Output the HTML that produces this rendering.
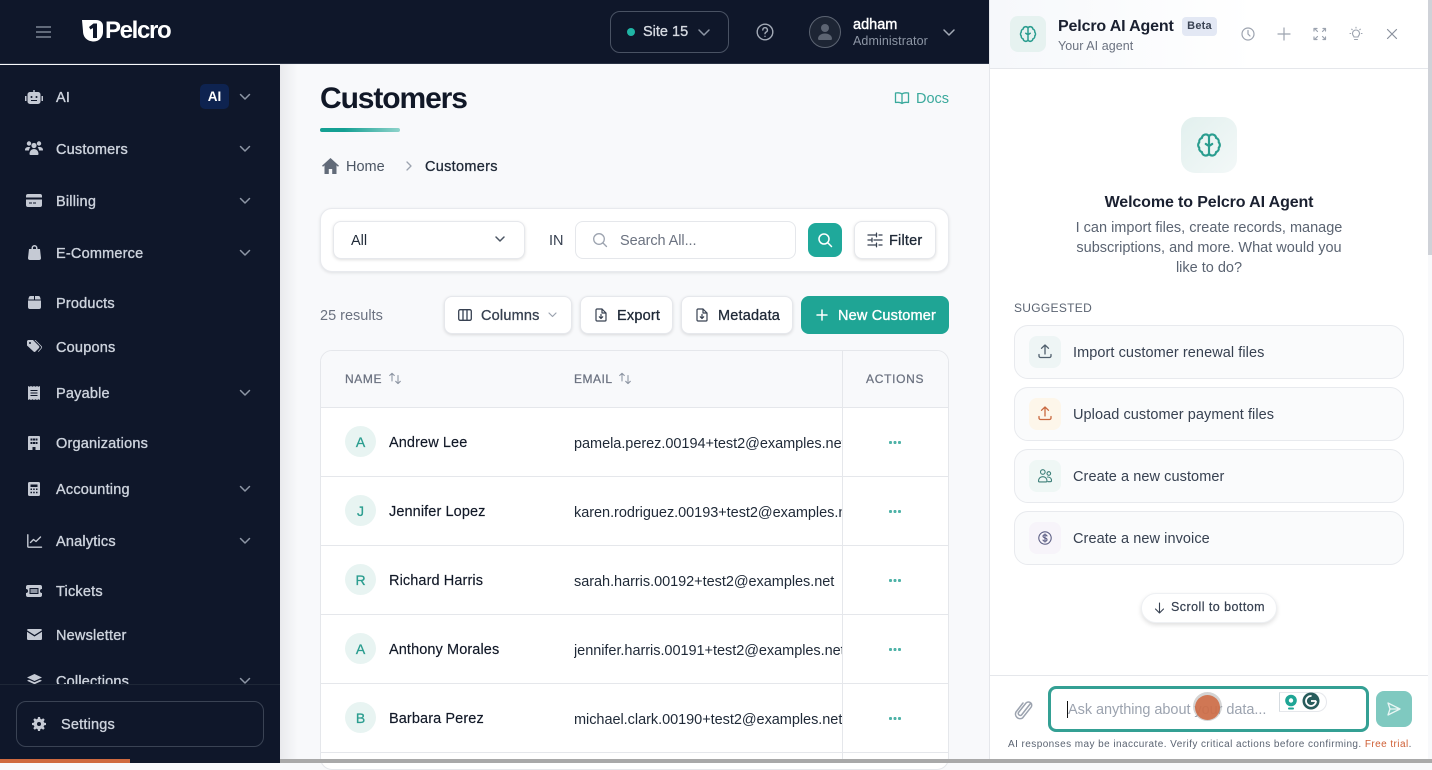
<!DOCTYPE html>
<html lang="en"><head><meta charset="utf-8"><title>Customers</title>
<style>
*{box-sizing:border-box}
html,body{margin:0;padding:0;width:1432px;height:763px;overflow:hidden;background:#f8f9fb;font-family:"Liberation Sans",sans-serif;color:#111827}
.a{position:absolute;white-space:nowrap}
.t{position:absolute;white-space:nowrap;line-height:20px;height:20px;transform:translateY(1px)}
svg{position:absolute;display:block;overflow:visible}
.nav{color:#cdd3dd;font-size:14.5px;-webkit-text-stroke:.35px #cdd3dd;letter-spacing:.2px;left:56px}
.chev{fill:none;stroke:#8d96a5;stroke-width:1.5;stroke-linecap:round;stroke-linejoin:round}
.card{position:absolute;background:#fff;border:1px solid #e6e8ec;border-radius:8px;box-shadow:0 1px 3px rgba(0,0,0,.13)}
.btxt{font-size:14.5px;color:#1f2937;-webkit-text-stroke:.3px #1f2937;letter-spacing:.2px}
.hline{position:absolute;left:321px;width:627px;height:1px;background:#e5e7eb}
.av{position:absolute;left:345px;width:31px;height:31px;border-radius:50%;background:#e8f4f2;color:#2a9d8f;text-align:center;font-size:14px;-webkit-text-stroke:.3px #2a9d8f;line-height:32px}
.nm{left:389px;font-size:14.5px;color:#111827;letter-spacing:.1px;-webkit-text-stroke:.15px #111827}
.em{left:574px;font-size:14.5px;color:#1f2937;letter-spacing:-.04px;width:268px;overflow:hidden}
.dots{position:absolute;left:889px;width:13px;height:3px;background:radial-gradient(circle at 1.5px 1.5px,#4fb3a8 1.5px,transparent 1.6px) 0 0/4.5px 3px repeat-x}
.sug{position:absolute;left:1014px;width:390px;height:54px;background:#fafbfc;border:1px solid #e8eaee;border-radius:14px}
.sic{position:absolute;left:1029px;width:32px;height:32px;border-radius:8px}
.stx{left:1073px;font-size:14.5px;color:#374151;letter-spacing:.07px}
.hd{font-size:12px;letter-spacing:.6px;color:#6b7280;-webkit-text-stroke:.25px #6b7280}
</style></head><body>

<!-- main -->
<div class="a" style="left:280px;top:64px;width:709px;height:699px;background:#f8f9fb"></div>
<div class="a" style="left:280px;top:64px;width:18px;height:699px;background:linear-gradient(90deg,#e9eaed,#f8f9fb)"></div>

<div class="t" style="left:320px;top:79px;font-size:30px;font-weight:700;line-height:38px;height:38px;letter-spacing:-1.1px;color:#111827">Customers</div>
<div class="a" style="left:320px;top:128px;width:80px;height:4px;border-radius:2px;background:linear-gradient(90deg,#14a093 0,#14a093 30%,#8fd3cb 100%)"></div>

<svg style="left:894px;top:91px" width="16" height="14" viewBox="0 0 16 14" fill="none" stroke="#3aa99c" stroke-width="1.3" stroke-linejoin="round"><path d="M8 3C6.500 1.800 4 1.600 1.500 2v9.500c2.500-.4 5-.2 6.500 1 1.500-1.200 4-1.400 6.500-1V2C12 1.600 9.500 1.800 8 3zM8 3v9.500"/></svg>
<div class="t" style="left:916px;top:88px;font-size:14.5px;color:#3aa99c">Docs</div>

<svg style="left:322px;top:158px" width="17" height="16" viewBox="0 0 17 16" fill="#626b79"><path d="M8.500 0 0 7.800l1 .9L2.500 7.400V16h4.300v-5h3.400v5h4.300V7.400l1.500 1.300 1-.9z"/></svg>
<div class="t" style="left:346px;top:156px;font-size:14.5px;color:#4b5563">Home</div>
<svg style="left:405px;top:161px" width="8" height="10" viewBox="0 0 8 10" fill="none" stroke="#9ca3af" stroke-width="1.3" stroke-linecap="round" stroke-linejoin="round"><path d="M2 1l4 4-4 4"/></svg>
<div class="t btxt" style="left:425px;top:156px;letter-spacing:.3px">Customers</div>

<!-- filter card -->
<div class="a" style="left:320px;top:208px;width:629px;height:64px;background:#fff;border:1px solid #e8eaee;border-radius:12px;box-shadow:0 1px 3px rgba(0,0,0,.1)"></div>
<div class="card" style="left:333px;top:221px;width:192px;height:38px"></div>
<div class="t" style="left:351px;top:230px;font-size:14.5px;color:#1f2937">All</div>
<svg class="chev" style="left:495px;top:236px;stroke:#4b5563" width="10" height="7" viewBox="0 0 10 7"><path d="M1 1l4 4 4-4"/></svg>
<div class="t" style="left:549px;top:230px;font-size:14.5px;color:#374151">IN</div>
<div class="a" style="left:575px;top:221px;width:221px;height:38px;background:#fff;border:1px solid #e5e7eb;border-radius:8px"></div>
<svg style="left:592px;top:232px" width="16" height="16" viewBox="0 0 16 16" fill="none" stroke="#9ca3af" stroke-width="1.3" stroke-linecap="round"><circle cx="7" cy="7" r="5.300"/><path d="M11 11l3.500 3.500"/></svg>
<div class="t" style="left:620px;top:230px;font-size:14.5px;color:#6b7280;letter-spacing:-.07px">Search All...</div>
<div class="a" style="left:808px;top:223px;width:34px;height:34px;border-radius:8px;background:#1fa99b"></div>
<svg style="left:817px;top:232px" width="16" height="16" viewBox="0 0 16 16" fill="none" stroke="#fff" stroke-width="1.5" stroke-linecap="round"><circle cx="7" cy="7" r="5"/><path d="M11 11l3.500 3.500"/></svg>
<div class="card" style="left:854px;top:221px;width:82px;height:38px"></div>
<svg style="left:867px;top:232px" width="16" height="16" viewBox="0 0 16 16" fill="none" stroke="#374151" stroke-width="1.3" stroke-linecap="round"><path d="M1 3h8M12 3h3M1 8h3M7 8h8M1 13h8M12 13h3M9.500 1.200v3.600M5 6.200v3.600M9.500 11.200v3.600"/></svg>
<div class="t btxt" style="left:889px;top:230px">Filter</div>

<!-- toolbar -->
<div class="t" style="left:320px;top:305px;font-size:14.5px;color:#6b7280">25 results</div>
<div class="card" style="left:444px;top:296px;width:128px;height:38px"></div>
<svg style="left:458px;top:309px" width="14" height="12" viewBox="0 0 14 12" fill="none" stroke="#374151" stroke-width="1.3"><rect x=".7" y=".7" width="12.600" height="10.600" rx="1.5"/><path d="M5 1v10M9 1v10"/></svg>
<div class="t btxt" style="left:481px;top:305px;color:#374151;-webkit-text-stroke-color:#374151">Columns</div>
<svg class="chev" style="left:548px;top:312px;stroke:#9ca3af;stroke-width:1.2" width="9" height="6" viewBox="0 0 9 6"><path d="M1 1l3.500 3.500L8 1"/></svg>
<div class="card" style="left:580px;top:296px;width:93px;height:38px"></div>
<svg style="left:595px;top:308px" width="12" height="14" viewBox="0 0 12 14" fill="none" stroke="#374151" stroke-width="1.2" stroke-linejoin="round" stroke-linecap="round"><path d="M1 2a1 1 0 0 1 1-1h5l4 4v7a1 1 0 0 1-1 1H2a1 1 0 0 1-1-1zM7 1v4h4M6 6.500v4M4.300 8.800 6 10.500l1.700-1.700"/></svg>
<div class="t btxt" style="left:617px;top:305px">Export</div>
<div class="card" style="left:681px;top:296px;width:112px;height:38px"></div>
<svg style="left:696px;top:308px" width="12" height="14" viewBox="0 0 12 14" fill="none" stroke="#374151" stroke-width="1.2" stroke-linejoin="round" stroke-linecap="round"><path d="M1 2a1 1 0 0 1 1-1h5l4 4v7a1 1 0 0 1-1 1H2a1 1 0 0 1-1-1zM7 1v4h4M6 6.500v4M4.300 8.800 6 10.500l1.700-1.700"/></svg>
<div class="t btxt" style="left:718px;top:305px">Metadata</div>
<div class="a" style="left:801px;top:296px;width:148px;height:38px;border-radius:8px;background:#1fa595"></div>
<svg style="left:816px;top:309px" width="12" height="12" viewBox="0 0 12 12" fill="none" stroke="#fff" stroke-width="1.5" stroke-linecap="round"><path d="M6 1v10M1 6h10"/></svg>
<div class="t" style="left:838px;top:305px;font-size:14.5px;color:#fff;-webkit-text-stroke:.35px #fff;letter-spacing:.18px">New Customer</div>

<!-- table -->
<div class="a" style="left:320px;top:350px;width:629px;height:420px;background:#fff;border:1px solid #e5e7eb;border-radius:12px"></div>
<div class="a" style="left:321px;top:351px;width:627px;height:56px;background:#f8f9fb;border-radius:11px 11px 0 0"></div>
<div class="a" style="left:842px;top:351px;width:1px;height:412px;background:#e5e7eb"></div>
<div class="t hd" style="left:345px;top:368px">NAME</div>
<svg style="left:388px;top:372px" width="14" height="13" viewBox="0 0 14 13" fill="none" stroke="#9098a5" stroke-width="1.1" stroke-linecap="round" stroke-linejoin="round"><path d="M4 9V1.500M1.700 3.500 4 1.300l2.300 2.200M10 3.500V11.500M7.700 9.300l2.300 2.300 2.300-2.300"/></svg>
<div class="t hd" style="left:574px;top:368px;letter-spacing:.5px">EMAIL</div>
<svg style="left:618px;top:372px" width="14" height="13" viewBox="0 0 14 13" fill="none" stroke="#9098a5" stroke-width="1.1" stroke-linecap="round" stroke-linejoin="round"><path d="M4 9V1.500M1.700 3.500 4 1.300l2.300 2.200M10 3.500V11.500M7.700 9.300l2.300 2.300 2.300-2.300"/></svg>
<div class="t hd" style="left:866px;top:368px;letter-spacing:.7px">ACTIONS</div>

<div class="hline" style="top:407px"></div>
<div class="hline" style="top:476px"></div>
<div class="hline" style="top:545px"></div>
<div class="hline" style="top:614px"></div>
<div class="hline" style="top:683px"></div>
<div class="hline" style="top:752px"></div>

<div class="av" style="top:426px">A</div><div class="t nm" style="top:432px">Andrew Lee</div><div class="t em" style="top:433px">pamela.perez.00194+test2@examples.net</div><div class="dots" style="top:441px"></div>
<div class="av" style="top:495px">J</div><div class="t nm" style="top:501px">Jennifer Lopez</div><div class="t em" style="top:502px">karen.rodriguez.00193+test2@examples.net</div><div class="dots" style="top:510px"></div>
<div class="av" style="top:564px">R</div><div class="t nm" style="top:570px">Richard Harris</div><div class="t em" style="top:571px">sarah.harris.00192+test2@examples.net</div><div class="dots" style="top:579px"></div>
<div class="av" style="top:633px">A</div><div class="t nm" style="top:639px">Anthony Morales</div><div class="t em" style="top:640px">jennifer.harris.00191+test2@examples.net</div><div class="dots" style="top:648px"></div>
<div class="av" style="top:702px">B</div><div class="t nm" style="top:708px">Barbara Perez</div><div class="t em" style="top:709px">michael.clark.00190+test2@examples.net</div><div class="dots" style="top:717px"></div>

<!-- top bar -->
<div class="a" style="left:0;top:0;width:989px;height:64px;background:#0f172a;border-bottom:1px solid #2a3345"></div>
<svg style="left:36px;top:26px" width="15" height="12" viewBox="0 0 15 12" fill="none" stroke="#7d8594" stroke-width="1.5"><path d="M0 1h15M0 6h15M0 11h15"/></svg>
<svg style="left:82px;top:20px" width="21" height="22" viewBox="0 0 21 22"><path d="M0 0h14c4.500 0 7 2.500 7 6v6c0 5-4 9.500-9 9.500C5 21.500 1 17 1 11z" fill="#fff"/><path d="M7 7l4.500-3.500h3.500V18h-4V8l-2.500 1.500z" fill="#0f172a"/></svg>
<div class="t" style="left:105px;top:15px;font-size:24px;line-height:30px;height:30px;font-weight:700;color:#fff;letter-spacing:-1.35px">Pelcro</div>

<div class="a" style="left:610px;top:11px;width:119px;height:42px;border:1px solid #495263;border-radius:10px"></div>
<div class="a" style="left:627px;top:28px;width:8px;height:8px;border-radius:50%;background:#1fb5a5"></div>
<div class="t" style="left:643px;top:21px;font-size:14.5px;color:#d7dbe2;-webkit-text-stroke:.35px #d7dbe2">Site 15</div>
<svg class="chev" style="left:698px;top:29px" width="12" height="8" viewBox="0 0 12 8"><path d="M1 1l5 5 5-5"/></svg>
<svg style="left:756px;top:23px" width="18" height="18" viewBox="0 0 18 18" fill="none" stroke="#a3aab6" stroke-width="1.4" stroke-linecap="round"><circle cx="9" cy="9" r="7.800"/><path d="M6.800 7a2.300 2.300 0 1 1 3.400 2c-.8.500-1.200 1-1.200 1.700M9 13.300v.1"/></svg>
<div class="a" style="left:809px;top:16px;width:32px;height:32px;border-radius:50%;border:1.5px solid #5c6472;background:#1d2534"></div>
<svg style="left:815px;top:22px" width="20" height="20" viewBox="0 0 20 20" fill="#5c6472"><circle cx="10" cy="6" r="4"/><path d="M3 17c0-3.500 3-5.500 7-5.500s7 2 7 5.500c0 .8-.8 1-2 1H5c-1.200 0-2-.2-2-1z"/></svg>
<div class="t" style="left:853px;top:14px;font-size:14.5px;color:#fff;-webkit-text-stroke:.4px #fff">adham</div>
<div class="t" style="left:853px;top:30px;font-size:12.5px;color:#8d96a5;letter-spacing:.1px">Administrator</div>
<svg class="chev" style="left:943px;top:29px;stroke:#a3aab6" width="12" height="8" viewBox="0 0 12 8"><path d="M1 1l5 5 5-5"/></svg>

<!-- sidebar -->
<div class="a" style="left:0;top:65px;width:280px;height:698px;background:#0f172a;overflow:hidden"></div>
<svg style="left:25px;top:90px" width="18" height="14" viewBox="0 0 18 14" fill="#c5cad4"><path d="M5 2h8a2.500 2.500 0 0 1 2.500 2.500v7A2.500 2.500 0 0 1 13 14H5a2.500 2.500 0 0 1-2.500-2.500v-7A2.500 2.500 0 0 1 5 2zM0 6h1.500v5H0zM16.500 6H18v5h-1.500z"/><rect x="8.300" y="0" width="1.400" height="3"/><circle cx="6.500" cy="7" r="1" fill="#0f172a"/><circle cx="11.500" cy="7" r="1" fill="#0f172a"/><rect x="6" y="10" width="6" height="1" fill="#0f172a"/></svg>
<div class="t nav" style="top:87px">AI</div>
<div class="a" style="left:200px;top:84px;width:29px;height:25px;border-radius:5px;background:#0e2350;color:#fff;font-size:13.5px;font-weight:700;text-align:center;line-height:25px">AI</div>
<svg class="chev" style="left:240px;top:94px" width="10" height="6" viewBox="0 0 10 6"><path d="M.5.500 5 5 9.500.5"/></svg>

<svg style="left:25px;top:141px" width="18" height="15" viewBox="0 0 18 15" fill="#c5cad4"><circle cx="4" cy="2.500" r="2.200"/><circle cx="14" cy="2.500" r="2.200"/><circle cx="9" cy="4.500" r="2.600"/><path d="M0 9c0-2 1.500-3 3.500-3 .8 0 1.400.2 1.900.5C4.500 7.300 4 8.300 4 9.500H.5C.2 9.500 0 9.300 0 9zM18 9c0-2-1.500-3-3.500-3-.8 0-1.400.2-1.900.5.900.8 1.400 1.800 1.400 3h3.500c.3 0 .5-.2.500-.5zM4.500 13c0-3 2-5 4.500-5s4.500 2 4.500 5c0 .6-.4 1-1 1h-7c-.6 0-1-.4-1-1z"/></svg>
<div class="t nav" style="top:139px">Customers</div>
<svg class="chev" style="left:240px;top:146px" width="10" height="6" viewBox="0 0 10 6"><path d="M.5.500 5 5 9.500.5"/></svg>

<svg style="left:26px;top:194px" width="16" height="13" viewBox="0 0 16 13" fill="#c5cad4"><path d="M2 0h12a2 2 0 0 1 2 2v1.500H0V2a2 2 0 0 1 2-2zM0 5.500h16V11a2 2 0 0 1-2 2H2a2 2 0 0 1-2-2z"/><rect x="3" y="8.500" width="3" height="1" fill="#0f172a"/><rect x="7" y="8.500" width="3" height="1" fill="#0f172a"/></svg>
<div class="t nav" style="top:191px">Billing</div>
<svg class="chev" style="left:240px;top:198px" width="10" height="6" viewBox="0 0 10 6"><path d="M.5.500 5 5 9.500.5"/></svg>

<svg style="left:28px;top:245px" width="13" height="15" viewBox="0 0 13 15" fill="#c5cad4"><path d="M3.500 4V3a3 3 0 0 1 6 0v1H12l1 9a2 2 0 0 1-2 2H2a2 2 0 0 1-2-2l1-9zM5 4h3V3a1.500 1.500 0 0 0-3 0z"/></svg>
<div class="t nav" style="top:243px">E-Commerce</div>
<svg class="chev" style="left:240px;top:250px" width="10" height="6" viewBox="0 0 10 6"><path d="M.5.500 5 5 9.500.5"/></svg>

<svg style="left:28px;top:296px" width="13" height="13" viewBox="0 0 13 13" fill="#c5cad4"><path d="M2.500 0H6v3.500H0.200L1 1C1.200.4 1.800 0 2.500 0zM7 0h3.500c.7 0 1.300.4 1.500 1l.8 2.500H7zM0 4.500h13V11a2 2 0 0 1-2 2H2a2 2 0 0 1-2-2z"/></svg>
<div class="t nav" style="top:293px">Products</div>

<svg style="left:27px;top:340px" width="15" height="13" viewBox="0 0 15 13" fill="#c5cad4"><path d="M0 1.500C0 .7.700 0 1.500 0H6l6 6a1.500 1.500 0 0 1 0 2l-3.500 3.500a1.500 1.500 0 0 1-2 0L0 5.500z"/><path d="M8.500 0 14.500 6a1.800 1.800 0 0 1 0 2.500L11.500 12 11 11.400l3-3.400c.4-.5.400-1 0-1.400L7.500 0z"/><circle cx="3" cy="3" r="1" fill="#0f172a"/></svg>
<div class="t nav" style="top:337px">Coupons</div>

<svg style="left:28px;top:386px" width="12" height="14" viewBox="0 0 12 14" fill="#c5cad4"><path d="M0 0l1.500.8L3 0l1.500.8L6 0l1.500.8L9 0l1.500.8L12 0v14l-1.500-.8L9 14l-1.500-.8L6 14l-1.500-.8L3 14l-1.500-.8L0 14z"/><path d="M2.500 4h7v1h-7zM2.500 6.500h7v1h-7zM2.500 9h7v1h-7z" fill="#0f172a"/></svg>
<div class="t nav" style="top:383px">Payable</div>
<svg class="chev" style="left:240px;top:390px" width="10" height="6" viewBox="0 0 10 6"><path d="M.5.500 5 5 9.500.5"/></svg>

<svg style="left:28px;top:436px" width="12" height="14" viewBox="0 0 12 14" fill="#c5cad4"><path d="M1 0h10a1 1 0 0 1 1 1v13H7.500v-3h-3v3H0V1a1 1 0 0 1 1-1z"/><path d="M2.500 2.500h2v2h-2zM5 2.500h2v2H5zM7.500 2.500h2v2h-2zM2.500 6h2v2h-2zM5 6h2v2H5zM7.500 6h2v2h-2z" fill="#0f172a"/></svg>
<div class="t nav" style="top:433px">Organizations</div>

<svg style="left:28px;top:482px" width="12" height="14" viewBox="0 0 12 14" fill="#c5cad4"><rect width="12" height="14" rx="1.500"/><path d="M2.500 2.500h7v2.500h-7zM2.500 6.500h1.500v1.500H2.500zM5.200 6.500h1.500v1.500H5.200zM8 6.500h1.500v1.500H8zM2.500 9.800h1.500v1.500H2.500zM5.200 9.800h1.500v1.500H5.200zM8 9.800h1.500v1.500H8z" fill="#0f172a"/></svg>
<div class="t nav" style="top:479px">Accounting</div>
<svg class="chev" style="left:240px;top:486px" width="10" height="6" viewBox="0 0 10 6"><path d="M.5.500 5 5 9.500.5"/></svg>

<svg style="left:27px;top:534px" width="15" height="14" viewBox="0 0 15 14" fill="none" stroke="#c5cad4" stroke-width="1.4" stroke-linecap="round" stroke-linejoin="round"><path d="M.8.800V12.500a.7.700 0 0 0 .7.700h13M3.500 8.500l3-3 2.500 2 4.500-4.500"/></svg>
<div class="t nav" style="top:531px">Analytics</div>
<svg class="chev" style="left:240px;top:538px" width="10" height="6" viewBox="0 0 10 6"><path d="M.5.500 5 5 9.500.5"/></svg>

<svg style="left:26px;top:585px" width="16" height="12" viewBox="0 0 16 12" fill="#c5cad4"><path d="M2 0h12a2 2 0 0 1 2 2v2a2 2 0 0 0 0 4v2a2 2 0 0 1-2 2H2a2 2 0 0 1-2-2V8a2 2 0 0 0 0-4V2a2 2 0 0 1 2-2z"/><rect x="3.500" y="3" width="9" height="6" fill="#0f172a"/><rect x="4.500" y="4" width="7" height="4" fill="#8d94a2"/></svg>
<div class="t nav" style="top:581px">Tickets</div>

<svg style="left:27px;top:629px" width="15" height="11" viewBox="0 0 15 11" fill="#c5cad4"><path d="M1.300 0h12.400c.7 0 1.300.5 1.300 1.200L7.500 6 0 1.200C0 .5.600 0 1.300 0zM0 2.800 7.500 7.500 15 2.800v6.900c0 .7-.6 1.300-1.300 1.300H1.300C.6 11 0 10.400 0 9.700z"/></svg>
<div class="t nav" style="top:625px">Newsletter</div>

<svg style="left:27px;top:674px" width="15" height="13" viewBox="0 0 15 13" fill="#c5cad4"><path d="M7.500 0 15 3.500 7.500 7 0 3.500zM2 5.800 7.500 8.300 13 5.800l2 1-7.500 3.500L0 6.800z"/></svg>
<div class="t nav" style="top:671px">Collections</div>
<svg class="chev" style="left:240px;top:678px" width="10" height="6" viewBox="0 0 10 6"><path d="M.5.500 5 5 9.500.5"/></svg>

<div class="a" style="left:0;top:684px;width:280px;height:79px;background:#0f172a;border-top:1px solid #1e2737"></div>
<div class="a" style="left:16px;top:701px;width:248px;height:46px;border:1px solid #3a4354;border-radius:10px"></div>
<svg style="left:32px;top:717px" width="14" height="14" viewBox="0 0 14 14"><path fill="#c5cad4" d="M6 0h2l.4 1.900 1.200.5L11.200 1.300l1.500 1.500-1.100 1.600.5 1.200L14 6v2l-1.900.4-.5 1.200 1.100 1.600-1.500 1.500-1.600-1.100-1.200.5L8 14H6l-.4-1.900-1.200-.5-1.600 1.100-1.500-1.500 1.100-1.600-.5-1.200L0 8V6l1.900-.4.5-1.200L1.300 2.800l1.500-1.500 1.600 1.100 1.200-.5z"/><circle cx="7" cy="7" r="2" fill="#0f172a"/></svg>
<div class="t nav" style="left:61px;top:714px">Settings</div>
<div class="a" style="left:0;top:759px;width:130px;height:4px;background:#cf6a3f"></div>

<!-- agent panel -->
<div class="a" style="left:989px;top:0;width:443px;height:763px;background:#fff;border-left:1px solid #e5e7eb"></div>
<div class="a" style="left:990px;top:0;width:442px;height:69px;background:linear-gradient(90deg,#f6f8fb,#fff 60%);border-bottom:1px solid #e5e7eb"></div>
<div class="a" style="left:1428px;top:0;width:4px;height:255px;background:#cfd2d8"></div>
<div class="a" style="left:1428px;top:255px;width:4px;height:504px;background:#f8f9fb"></div>

<div class="a" style="left:1010px;top:16px;width:36px;height:36px;border-radius:8px;background:#e6f2f0"></div>
<svg style="left:1019px;top:25px" width="18" height="18" viewBox="0 0 24 24" fill="none" stroke="#2a9d8f" stroke-width="2" stroke-linecap="round" stroke-linejoin="round"><path d="M12 4a3.500 3.500 0 0 0-6.500 1.500A3.500 3.500 0 0 0 3 9.500a3.500 3.500 0 0 0 0 5 3.500 3.500 0 0 0 2.500 4A3.500 3.500 0 0 0 12 20a3.500 3.500 0 0 0 6.500-1.500 3.500 3.500 0 0 0 2.500-4 3.500 3.500 0 0 0 0-5 3.500 3.500 0 0 0-2.500-4A3.500 3.500 0 0 0 12 4zM12 4v16M12 13l-3-2M12 13l3-2"/></svg>
<div class="t" style="left:1058px;top:16px;font-size:16px;font-weight:700;color:#1a2030;letter-spacing:-.15px">Pelcro AI Agent</div>
<div class="a" style="left:1182px;top:17px;width:35px;height:19px;border-radius:4px;background:#e3e8f4;color:#3b4454;font-size:11px;font-weight:700;text-align:center;line-height:19px;letter-spacing:.2px">Beta</div>
<div class="t" style="left:1058px;top:35px;font-size:12.5px;color:#6b7280;letter-spacing:.05px">Your AI agent</div>
<svg style="left:1241px;top:27px" width="14" height="14" viewBox="0 0 14 14" fill="none" stroke="#9ca3af" stroke-width="1.2" stroke-linecap="round"><circle cx="7" cy="7" r="6"/><path d="M7 3.500V7l2 2"/></svg>
<svg style="left:1278px;top:28px" width="12" height="12" viewBox="0 0 12 12" fill="none" stroke="#9ca3af" stroke-width="1.2" stroke-linecap="round"><path d="M6 0v12M0 6h12"/></svg>
<svg style="left:1314px;top:28px" width="12" height="12" viewBox="0 0 12 12" fill="none" stroke="#9ca3af" stroke-width="1.2" stroke-linecap="round" stroke-linejoin="round"><path d="M0 3V.5h3M9 .5h2.500V3M0 9v2.500h3M9 11.500h2.500V9M.5.500 3.500 3.500M11.500.5 8.500 3.500M.5 11.500l3-3M11.500 11.500l-3-3"/></svg>
<svg style="left:1349px;top:27px" width="14" height="14" viewBox="0 0 14 14" fill="none" stroke="#9ca3af" stroke-width="1.1" stroke-linecap="round"><path d="M5 10c0-1-1.500-1.500-1.500-3.500a3.500 3.500 0 0 1 7 0C10.500 8.500 9 9 9 10zM5.500 12.500h3M7 .3v.7M1 6.500h.7M12.300 6.500h.7M2.700 2.200l.5.500M11.300 2.200l-.5.500"/></svg>
<svg style="left:1387px;top:29px" width="10" height="10" viewBox="0 0 10 10" fill="none" stroke="#8a919d" stroke-width="1.2" stroke-linecap="round"><path d="M.5.500l9 9M9.500.5l-9 9"/></svg>

<div class="a" style="left:1181px;top:117px;width:56px;height:56px;border-radius:14px;background:linear-gradient(135deg,#e2f0ee,#f3f8f8)"></div>
<svg style="left:1196px;top:132px" width="26" height="26" viewBox="0 0 24 24" fill="none" stroke="#2a9d8f" stroke-width="2" stroke-linecap="round" stroke-linejoin="round"><path d="M12 4a3.500 3.500 0 0 0-6.500 1.500A3.500 3.500 0 0 0 3 9.500a3.500 3.500 0 0 0 0 5 3.500 3.500 0 0 0 2.500 4A3.500 3.500 0 0 0 12 20a3.500 3.500 0 0 0 6.500-1.500 3.500 3.500 0 0 0 2.500-4 3.500 3.500 0 0 0 0-5 3.500 3.500 0 0 0-2.500-4A3.500 3.500 0 0 0 12 4zM12 4v16M12 13l-3-2M12 13l3-2"/></svg>

<div class="t" style="left:990px;width:438px;text-align:center;top:192px;font-size:16px;font-weight:700;color:#1a2030;letter-spacing:-.12px">Welcome to Pelcro AI Agent</div>
<div class="t" style="left:990px;width:438px;text-align:center;top:217px;font-size:14.5px;color:#5b6472">I can import files, create records, manage</div>
<div class="t" style="left:990px;width:438px;text-align:center;top:237px;font-size:14.5px;color:#5b6472">subscriptions, and more. What would you</div>
<div class="t" style="left:990px;width:438px;text-align:center;top:257px;font-size:14.5px;color:#5b6472">like to do?</div>

<div class="t" style="left:1014px;top:297px;font-size:12px;color:#5b6472;letter-spacing:.3px">SUGGESTED</div>

<div class="sug" style="top:325px"></div>
<div class="sic" style="top:336px;background:#eef5f5"></div>
<svg style="left:1038px;top:344px" width="14" height="15" viewBox="0 0 14 15" fill="none" stroke="#4f5e6c" stroke-width="1.3" stroke-linecap="round" stroke-linejoin="round"><path d="M7 10V1M3.500 4.300 7 1l3.500 3.300M1 10.500v1.500a1.500 1.500 0 0 0 1.500 1.500h9A1.500 1.500 0 0 0 13 12v-1.500"/></svg>
<div class="t stx" style="top:342px">Import customer renewal files</div>

<div class="sug" style="top:387px"></div>
<div class="sic" style="top:398px;background:#fdf6ea"></div>
<svg style="left:1038px;top:406px" width="14" height="15" viewBox="0 0 14 15" fill="none" stroke="#c9683f" stroke-width="1.3" stroke-linecap="round" stroke-linejoin="round"><path d="M7 10V1M3.500 4.300 7 1l3.500 3.300M1 10.500v1.500a1.500 1.500 0 0 0 1.500 1.500h9A1.500 1.500 0 0 0 13 12v-1.500"/></svg>
<div class="t stx" style="top:404px">Upload customer payment files</div>

<div class="sug" style="top:449px"></div>
<div class="sic" style="top:460px;background:#eff7f5"></div>
<svg style="left:1038px;top:469px" width="14" height="14" viewBox="0 0 14 14" fill="none" stroke="#3c7f78" stroke-width="1.1" stroke-linecap="round"><circle cx="4.800" cy="3" r="2.300"/><circle cx="10.800" cy="4.500" r="1.800"/><path d="M.5 12c0-2.500 1.800-4.300 4.300-4.300S9 9.500 9 12c0 .6-.4.900-1 .9H1.500c-.6 0-1-.3-1-.9zM9.500 8c2.300 0 4 1.300 4 3.500 0 .8-.5 1.200-1.200 1.200H10"/></svg>
<div class="t stx" style="top:466px">Create a new customer</div>

<div class="sug" style="top:511px"></div>
<div class="sic" style="top:522px;background:#f7f4fa"></div>
<svg style="left:1038px;top:531px" width="14" height="14" viewBox="0 0 14 14" fill="none" stroke="#5d5f85" stroke-width="1.1" stroke-linecap="round"><circle cx="7" cy="7" r="6.200" stroke-dasharray="2.500 .4"/><path d="M9 5c-.3-.8-1-1.200-2-1.200-1.100 0-2 .5-2 1.500 0 2.200 4 1 4 3.300 0 1-.9 1.600-2 1.600S5.200 9.700 5 9M7 2.900v8.200"/></svg>
<div class="t stx" style="top:528px">Create a new invoice</div>

<div class="a" style="left:1141px;top:593px;width:136px;height:30px;background:#fff;border:1px solid #eef0f3;border-radius:15px;box-shadow:0 2px 5px rgba(0,0,0,.13)"></div>
<svg style="left:1154px;top:602px" width="11" height="12" viewBox="0 0 11 12" fill="none" stroke="#374151" stroke-width="1.1" stroke-linecap="round" stroke-linejoin="round"><path d="M5.500 1v10M1.500 7l4 4 4-4"/></svg>
<div class="t" style="left:1171px;top:596px;font-size:12.5px;color:#374151;letter-spacing:.45px;-webkit-text-stroke:.2px #374151">Scroll to bottom</div>

<div class="a" style="left:990px;top:675px;width:438px;height:1px;background:#e5e7eb"></div>
<svg style="left:1015px;top:700px" width="18" height="20" viewBox="0 0 18 20" fill="none" stroke="#9ca3af" stroke-width="1.5" stroke-linecap="round" stroke-linejoin="round"><path d="M15.500 3.500 6.500 15a2 2 0 0 1-3-2.500L11 3a3.300 3.300 0 0 1 5 4.300L7.500 18a4.600 4.600 0 0 1-6.500-6l7-9"/></svg>
<div class="a" style="left:1048px;top:686px;width:321px;height:46px;background:#fff;border:3px solid #34a094;border-radius:8px"></div>
<div class="a" style="left:1067px;top:701px;width:1px;height:17px;background:#111"></div>
<div class="t" style="left:1068px;top:699px;font-size:14.5px;color:#9ca3af;letter-spacing:-.05px">Ask anything about your data...</div>
<div class="a" style="left:1193px;top:692px;width:29px;height:29px;border-radius:50%;background:rgba(170,170,170,.5)"></div>
<div class="a" style="left:1195px;top:695px;width:25px;height:25px;border-radius:50%;background:#cf6a42;opacity:.88"></div>
<div class="a" style="left:1279px;top:692px;width:48px;height:20px;background:#fff;border:1px solid #e5e7eb;border-left-color:#d5dbe0;border-radius:0 10px 10px 0"></div>
<svg style="left:1284px;top:694px" width="14" height="17" viewBox="0 0 14 17"><circle cx="7" cy="6.500" r="5.800" fill="#1fa595"/><circle cx="7" cy="6.500" r="2.200" fill="#fff"/><rect x="4" y="13.500" width="6" height="2" rx="1" fill="#1fa595"/></svg>
<svg style="left:1302px;top:692px" width="18" height="18" viewBox="0 0 18 18"><circle cx="9" cy="9" r="8.500" fill="#285c5c"/><circle cx="9" cy="9" r="5" fill="none" stroke="#fff" stroke-width="1.8" stroke-dasharray="24 7"/><path d="M9 9h5" stroke="#fff" stroke-width="1.8"/></svg>
<div class="a" style="left:1376px;top:691px;width:36px;height:36px;border-radius:8px;background:#7fc9c0"></div>
<svg style="left:1387px;top:702px" width="14" height="14" viewBox="0 0 14 14" fill="none" stroke="#e8f6f4" stroke-width="1.3" stroke-linejoin="round" stroke-linecap="round"><path d="M1 1l12 6-12 6 2-6zM3 7h10"/></svg>
<div class="t" style="left:1008px;top:734px;font-size:10px;color:#5b6472;letter-spacing:.43px">AI responses may be inaccurate. Verify critical actions before confirming. <span style="color:#cf5f35">Free trial</span><span>.</span></div>

<div class="a" style="left:280px;top:759px;width:1152px;height:4px;background:#a9a9a9"></div>
</body></html>
